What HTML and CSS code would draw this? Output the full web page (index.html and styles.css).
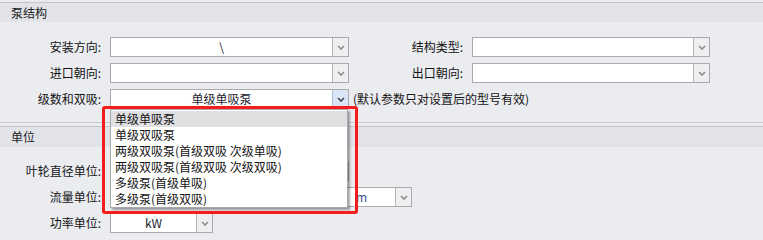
FILE: index.html
```html
<!DOCTYPE html>
<html lang="zh">
<head>
<meta charset="utf-8">
<title>泵结构</title>
<link rel="stylesheet" href="styles.css">
</head>
<body>
<div class="page">
  <section class="group first">
    <div class="group-head">泵结构</div>
    <div class="group-body form">
      <label class="lbl">安装方向:</label>
      <div class="sel"><span class="val">\</span><span class="btn"><svg viewBox="0 0 8 5" width="8" height="5"><path d="M1 1 L4 4 L7 1" fill="none" stroke="currentColor" stroke-width="1.6"/></svg></span></div>
      <label class="lbl">结构类型:</label>
      <div class="sel"><span class="val"></span><span class="btn"><svg viewBox="0 0 8 5" width="8" height="5"><path d="M1 1 L4 4 L7 1" fill="none" stroke="currentColor" stroke-width="1.6"/></svg></span></div>

      <label class="lbl">进口朝向:</label>
      <div class="sel"><span class="val"></span><span class="btn"><svg viewBox="0 0 8 5" width="8" height="5"><path d="M1 1 L4 4 L7 1" fill="none" stroke="currentColor" stroke-width="1.6"/></svg></span></div>
      <label class="lbl">出口朝向:</label>
      <div class="sel"><span class="val"></span><span class="btn"><svg viewBox="0 0 8 5" width="8" height="5"><path d="M1 1 L4 4 L7 1" fill="none" stroke="currentColor" stroke-width="1.6"/></svg></span></div>

      <label class="lbl">级数和双吸:</label>
      <div class="sel open"><span class="val">单级单吸泵</span><span class="btn"><svg viewBox="0 0 8 5" width="8" height="5"><path d="M1 1 L4 4 L7 1" fill="none" stroke="currentColor" stroke-width="1.6"/></svg></span></div>
      <div class="note">(默认参数只对设置后的型号有效)</div>
    </div>
  </section>

  <section class="group second">
    <div class="group-head">单位</div>
    <div class="group-body form">
      <label class="lbl">叶轮直径单位:</label>
      <div class="sel"><span class="val"></span><span class="btn"><svg viewBox="0 0 8 5" width="8" height="5"><path d="M1 1 L4 4 L7 1" fill="none" stroke="currentColor" stroke-width="1.6"/></svg></span></div>
      <div class="spacer"></div>

      <label class="lbl">流量单位:</label>
      <div class="sel wide"><span class="val left">m</span><span class="btn"><svg viewBox="0 0 8 5" width="8" height="5"><path d="M1 1 L4 4 L7 1" fill="none" stroke="currentColor" stroke-width="1.6"/></svg></span></div>
      <div class="spacer"></div>

      <label class="lbl">功率单位:</label>
      <div class="sel narrow"><span class="val">kW</span><span class="btn"><svg viewBox="0 0 8 5" width="8" height="5"><path d="M1 1 L4 4 L7 1" fill="none" stroke="currentColor" stroke-width="1.6"/></svg></span></div>
      <div class="spacer"></div>
    </div>
  </section>

  <ul class="dropdown">
    <li class="item active">单级单吸泵</li>
    <li class="item">单级双吸泵</li>
    <li class="item">两级双吸泵(首级双吸 次级单吸)</li>
    <li class="item">两级双吸泵(首级双吸 次级双吸)</li>
    <li class="item">多级泵(首级单吸)</li>
    <li class="item">多级泵(首级双吸)</li>
  </ul>
  <div class="highlight"></div>
</div>
</body>
</html>
```

FILE: styles.css
```css
html, body {
  margin: 0;
  padding: 0;
  background: #ebecf0;
  height: 100%;
  overflow: hidden;
}

.page {
  position: relative;
  padding-top: 2px;
  font-family: "Noto Sans CJK SC", "Noto Sans", sans-serif;
  font-size: 12px;
  color: #141414;
}

.group-head {
  border-top: 1px solid #c4c5ca;
  background: #e2e3e8;
  height: 19px;
  line-height: 20px;
  padding-left: 11px;
  color: #1c1c1c;
}

.first .group-body {
  padding-top: 15px;
  padding-bottom: 13px;
  border-bottom: 1px solid #c8c9cd;
}

.second {
  margin-top: 3px;
}

.second .group-head {
  height: 20px;
}

.second .group-body {
  padding-top: 14px;
}

.form {
  display: grid;
  grid-template-columns: 110px 239px 123px 238px;
  grid-auto-rows: 20px;
  row-gap: 6px;
}

.lbl {
  text-align: right;
  padding-right: 9px;
  line-height: 20px;
  white-space: nowrap;
}

.sel {
  display: flex;
  box-sizing: border-box;
  height: 20px;
  border: 1px solid #ababab;
  background: #fff;
}

.sel.wide {
  width: 302px;
}

.sel.narrow {
  width: 103px;
}

.val {
  flex: 1;
  text-align: center;
  line-height: 18px;
  color: #1e1e30;
  white-space: nowrap;
  overflow: hidden;
}

.val.left {
  text-align: left;
  padding-left: 245px;
  color: #3a4a8a;
}

.btn {
  width: 15px;
  border-left: 1px solid #b4b4b4;
  background: #efeff1;
  color: #8c8c8c;
  display: flex;
  align-items: center;
  justify-content: center;
}

.open .btn {
  background: #dae6f5;
  border-left-color: #a9bcd6;
  color: #3e4450;
}

.note {
  grid-column: 3 / 5;
  line-height: 20px;
  padding-left: 4px;
  white-space: nowrap;
}

.spacer {
  grid-column: 3 / 5;
}

.dropdown {
  position: absolute;
  left: 110px;
  top: 109px;
  width: 238px;
  box-sizing: border-box;
  margin: 0;
  padding: 1px 0 0;
  list-style: none;
  background: #fff;
  border: 1px solid #a8a8a8;
  box-shadow: 2px 2px 2px rgba(0, 0, 0, 0.35);
}

.item {
  height: 16px;
  line-height: 16px;
  padding-left: 4px;
  white-space: nowrap;
  color: #141414;
}

.item.active {
  background: #e0e0e2;
}

.highlight {
  position: absolute;
  left: 102px;
  top: 106px;
  width: 250px;
  height: 102px;
  border: 3px solid #f41c1c;
  border-radius: 3px;
  pointer-events: none;
}
```
